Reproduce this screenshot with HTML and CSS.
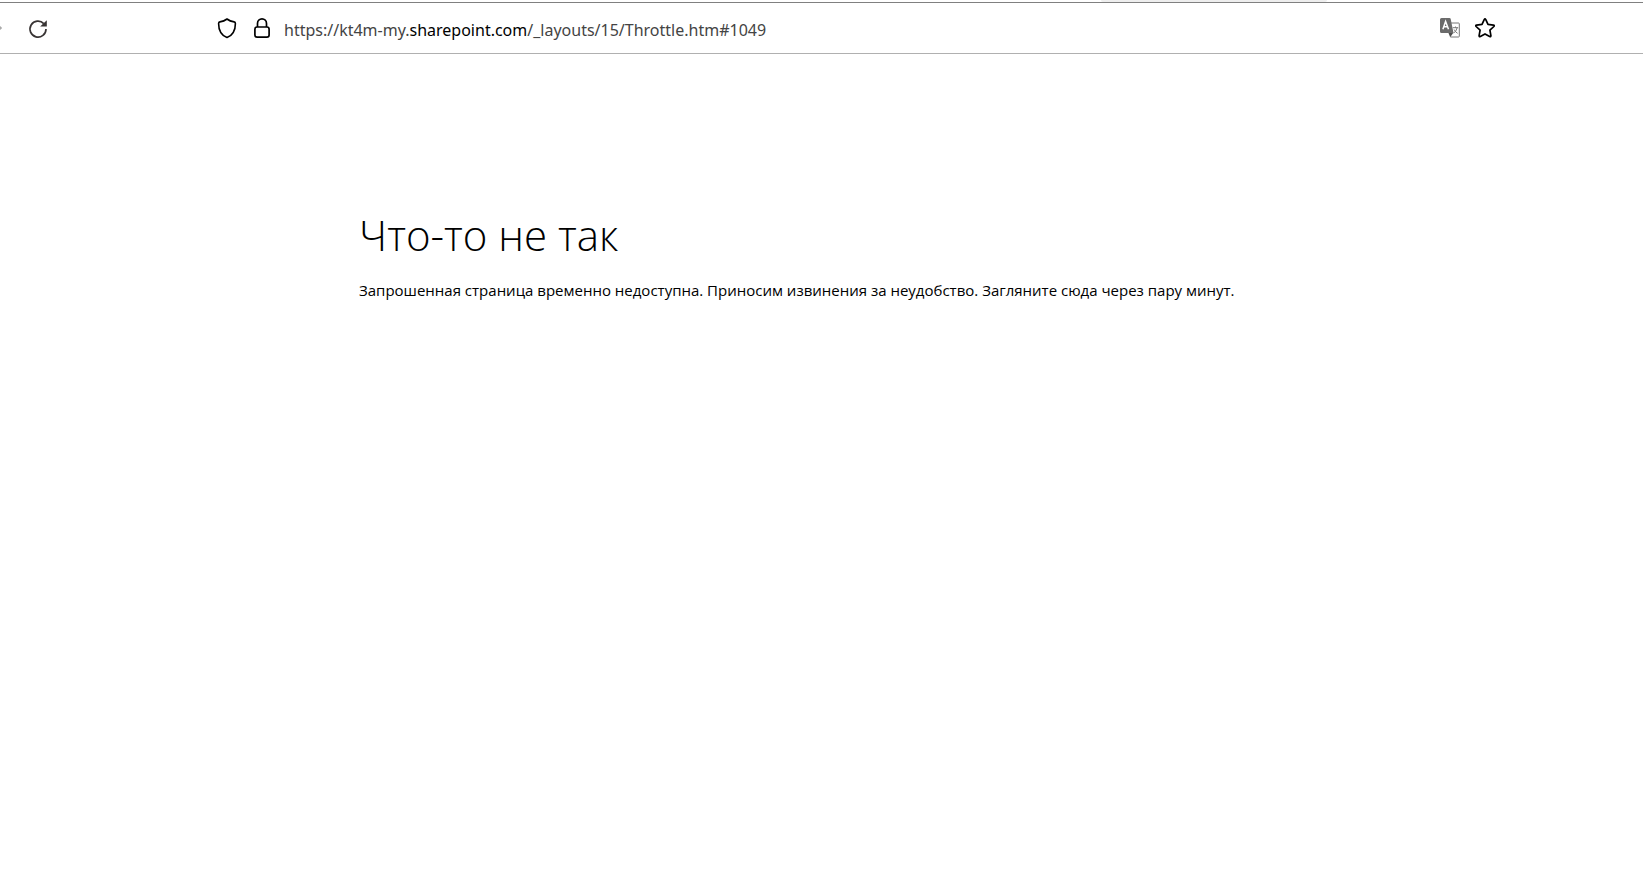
FILE: index.html
```
<!DOCTYPE html>
<html lang="ru">
<head>
  <meta charset="UTF-8">
  <meta name="viewport" content="width=device-width, initial-scale=1.0">
  <title>Что-то не так</title>
  <link rel="stylesheet" href="styles.css">
</head>
<body>
  <div class="tabs"><div class="tab"></div></div>
  <header class="toolbar">
    <button class="icon-btn forward-btn" aria-label="Вперёд">
      <svg width="2" height="20" viewBox="18 0 2 20"><path d="M18 8l1.8 1.6v.8L18 12z" fill="#aaa"/></svg>
    </button>
    <button class="icon-btn reload-btn" aria-label="Обновить">
      <svg width="20" height="20" viewBox="0 0 20 20">
        <path d="M15.8 4.6A8 8 0 1 0 18 10" fill="none" stroke="#383434" stroke-width="1.7"/>
        <path d="M18.8 1.2v6.4h-6.6z" fill="#383434"/>
      </svg>
    </button>
    <div class="urlbar">
      <button class="icon-btn" aria-label="Защита">
        <svg width="20" height="22" viewBox="0 0 20 22">
          <path d="M10 2C8.3 3.3 5.3 4.5 2.9 4.9Q1.6 5.1 1.6 6.4C1.6 13.5 4.5 18.3 10 20.5C15.5 18.3 18.4 13.5 18.4 6.4Q18.4 5.1 17.1 4.9C14.7 4.5 11.7 3.3 10 2z" fill="none" stroke="#000" stroke-width="1.6" stroke-linejoin="round"/>
        </svg>
      </button>
      <button class="icon-btn" aria-label="Соединение">
        <svg width="20" height="22" viewBox="0 0 20 22" fill="none" stroke="#000" stroke-width="1.7">
          <rect x="2.9" y="10" width="14.2" height="10.2" rx="2.2"/>
          <path d="M5.5 10V6.4a4.5 4.5 0 0 1 9 0V10"/>
        </svg>
      </button>
      <div class="url" role="textbox" aria-label="Адрес" contenteditable="true" spellcheck="false">https://kt4m-my.<span class="domain">sharepoint.com</span>/_layouts/15/Throttle.htm#1049</div>
      <button class="icon-btn" aria-label="Перевести">
        <svg width="20" height="22" viewBox="0 0 20 22">
          <path d="M10 6h8.5q.8 0 .8.8v12.4q0 .8-.8.8H10.5" fill="#fff" stroke="#777" stroke-width="1"/>
          <path d="M1.5 1h8q1 0 1.2 1l2.8 14H1.5Q0 16 0 14.5v-12Q0 1 1.5 1z" fill="#6b6b6b"/>
          <path d="M8.5 16h4.6l-2.9 4.2z" fill="#4c4c4c"/>
          <path d="M2.9 12.3L5.6 4.5l2.9 7.8M3.8 9.7h3.7" fill="none" stroke="#fff" stroke-width="1.5"/>
          <path d="M12.8 10.7h5.4M15.5 9.5v1.2M17.2 10.7q-.8 3.5-3.8 5.6M14.1 12.5q1.3 2.6 3.5 3.8" fill="none" stroke="#777" stroke-width="1"/>
        </svg>
      </button>
      <button class="icon-btn" aria-label="Добавить в закладки">
        <svg width="20" height="22" viewBox="0 0 20 22">
          <path d="M9.2 2.6q.8-1.3 1.6 0l2.2 4.8 5.4.7q1.4.3.5 1.4l-4 3.7 1 5.4q.1 1.4-1.2.9L10 16.9l-4.7 2.6q-1.3.5-1.2-.9l1-5.4-4-3.7q-.9-1.1.5-1.4l5.4-.7z" fill="none" stroke="#000" stroke-width="1.7" stroke-linejoin="round"/>
        </svg>
      </button>
    </div>
  </header>
  <main>
    <h1>Что-то не так</h1>
    <p>Запрошенная страница временно недоступна. Приносим извинения за неудобство. Загляните сюда через пару минут.</p>
  </main>
</body>
</html>
```
FILE: styles.css
```
body {
  margin: 0;
  background-color: white;
  color: black;
  font-family: "Segoe UI", "Open Sans", sans-serif;
}
.tabs {
  height: 2px;
  padding-left: 67%;
}
.tab {
  width: 226px;
  height: 2px;
  border-radius: 0 0 4px 4px;
  background-color: #eee;
}
.toolbar {
  display: flex;
  align-items: center;
  height: 50px;
  border-top: 1px solid #808080;
  border-bottom: 1px solid #b0b0b0;
}
.icon-btn {
  display: flex;
  flex: none;
  padding: 0;
  border: none;
  background: none;
  cursor: pointer;
}
.reload-btn {
  margin-left: 26px;
  padding-top: 2px;
}
.urlbar {
  display: flex;
  flex: 1;
  align-items: center;
  gap: 15px;
  margin: 0 148px 0 169px;
}
.url {
  flex: 1;
  margin-left: -3px;
  padding-top: 4px;
  font-family: "Segoe UI", "Noto Sans", sans-serif;
  font-size: 16px;
  line-height: 24px;
  color: #444;
  white-space: nowrap;
  outline: none;
}
.domain {
  color: black;
}
main {
  padding: 148px 24px 0 359px;
}
h1 {
  margin: 0;
  font-size: 42px;
  font-weight: 300;
  line-height: 66px;
}
p {
  margin: 10px 0 0;
  font-size: 15px;
  line-height: 24px;
}
```
